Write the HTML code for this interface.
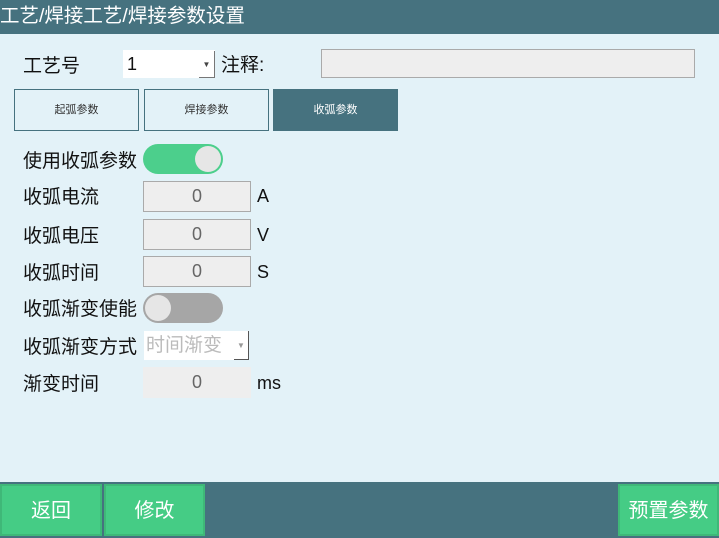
<!DOCTYPE html><html><head><meta charset="utf-8"><style>
*{margin:0;padding:0;box-sizing:border-box}
body{width:719px;height:538px;position:relative;background:#e3f2f8;font-family:"Liberation Sans","Noto Sans CJK SC",sans-serif;overflow:hidden;color:#111}
.a{position:absolute}
.hd{left:0;top:0;width:719px;height:34px;background:#46727f;color:#fff;font-size:19.5px;line-height:32px;padding-left:0}
.lb{font-size:19px;line-height:22px;left:23px;margin-top:2px}
.u{font-size:18px;line-height:22px;left:257px}
.box{background:#eeeeee;border:1px solid #aaa;text-align:center;font-size:18px;color:#666}
.tab{top:89px;height:42px;border:1px solid #46727f;font-size:11px;text-align:center;line-height:40px;color:#333}
.btn{background:#45cc85;color:#fff;font-size:20px;text-align:center;line-height:50px;top:484px;height:52px;border:2px solid #3fb878}
</style></head><body>
<div class="a hd">工艺/焊接工艺/焊接参数设置</div>
<div class="a lb" style="top:54px">工艺号</div>
<div class="a" style="left:123px;top:50px;width:92px;height:28px;background:#fff;font-size:18px;line-height:28px;padding-left:4px">1</div>
<div class="a" style="left:199px;top:51px;width:16px;height:27px;border-right:1px solid #777;border-bottom:1px solid #777;font-size:8px;color:#444;text-align:center;line-height:27px">▼</div>
<div class="a" style="left:221px;top:55px;font-size:19px;line-height:22px">注释:</div>
<div class="a" style="left:321px;top:49px;width:374px;height:29px;background:#eee;border:1px solid #aaa"></div>
<div class="a tab" style="left:14px;width:125px">起弧参数</div>
<div class="a tab" style="left:144px;width:125px">焊接参数</div>
<div class="a tab" style="left:273px;width:125px;background:#46727f;color:#fff">收弧参数</div>
<div class="a lb" style="top:149px">使用收弧参数</div>
<div class="a" style="left:143px;top:144px;width:80px;height:30px;border-radius:15px;background:#4ccf8c"><div class="a" style="right:2px;top:2px;width:26px;height:26px;border-radius:13px;background:#e6e6e6"></div></div>
<div class="a lb" style="top:185px">收弧电流</div>
<div class="a box" style="left:143px;top:181px;width:108px;height:31px;line-height:29px">0</div>
<div class="a u" style="top:185px">A</div>
<div class="a lb" style="top:224px">收弧电压</div>
<div class="a box" style="left:143px;top:219px;width:108px;height:31px;line-height:29px">0</div>
<div class="a u" style="top:224px">V</div>
<div class="a lb" style="top:261px">收弧时间</div>
<div class="a box" style="left:143px;top:256px;width:108px;height:31px;line-height:29px">0</div>
<div class="a u" style="top:261px">S</div>
<div class="a lb" style="top:297px">收弧渐变使能</div>
<div class="a" style="left:143px;top:293px;width:80px;height:30px;border-radius:15px;background:#a6a6a6"><div class="a" style="left:2px;top:2px;width:26px;height:26px;border-radius:13px;background:#e6e6e6"></div></div>
<div class="a lb" style="top:335px">收弧渐变方式</div>
<div class="a" style="left:144px;top:331px;width:105px;height:29px;background:#fff;font-size:19px;line-height:29px;padding-left:2px;color:#bbb">时间渐变</div>
<div class="a" style="left:234px;top:331px;width:15px;height:29px;border-right:1px solid #555;border-bottom:1px solid #555;font-size:8px;color:#999;text-align:center;line-height:29px">▼</div>
<div class="a lb" style="top:372px">渐变时间</div>
<div class="a" style="left:143px;top:367px;width:108px;height:31px;background:#eee;text-align:center;font-size:18px;line-height:31px;color:#666">0</div>
<div class="a u" style="top:372px">ms</div>
<div class="a" style="left:0;top:482px;width:719px;height:56px;background:#46727f"></div>
<div class="a btn" style="left:0;width:102px">返回</div>
<div class="a btn" style="left:104px;width:101px">修改</div>
<div class="a btn" style="left:618px;width:101px">预置参数</div>
</body></html>
